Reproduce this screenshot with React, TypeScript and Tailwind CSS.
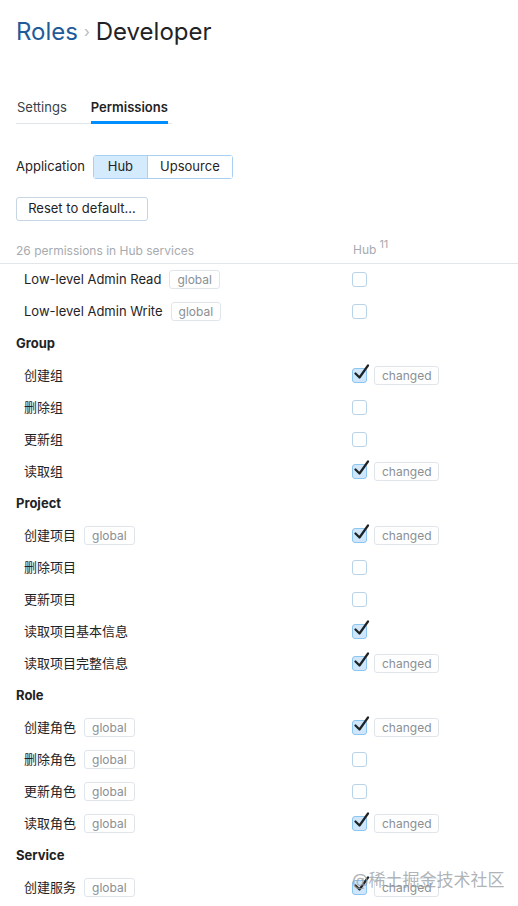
import React, { useState } from "react";

interface Permission {
  name: string;
  global?: boolean;
  checked?: boolean;
  changed?: boolean;
}

interface Group {
  title?: string;
  items: Permission[];
}

const GROUPS: Group[] = [
  {
    items: [
      { name: "Low-level Admin Read", global: true },
      { name: "Low-level Admin Write", global: true },
    ],
  },
  {
    title: "Group",
    items: [
      { name: "创建组", checked: true, changed: true },
      { name: "删除组" },
      { name: "更新组" },
      { name: "读取组", checked: true, changed: true },
    ],
  },
  {
    title: "Project",
    items: [
      { name: "创建项目", global: true, checked: true, changed: true },
      { name: "删除项目" },
      { name: "更新项目" },
      { name: "读取项目基本信息", checked: true },
      { name: "读取项目完整信息", checked: true, changed: true },
    ],
  },
  {
    title: "Role",
    items: [
      { name: "创建角色", global: true, checked: true, changed: true },
      { name: "删除角色", global: true },
      { name: "更新角色", global: true },
      { name: "读取角色", global: true, checked: true, changed: true },
    ],
  },
  {
    title: "Service",
    items: [{ name: "创建服务", global: true, checked: true, changed: true }],
  },
];

// 작은 태그 (global / changed)
const Tag: React.FC<{ children: React.ReactNode }> = ({ children }) => (
  <span className="inline-flex h-[19px] items-center rounded-[3px] border border-[#dfe5eb] px-[7px] text-[12px] leading-none text-[#8a8f94]">
    {children}
  </span>
);

const Checkbox: React.FC<{ checked?: boolean }> = ({ checked }) => (
  <span
    className={`relative block h-[15px] w-[15px] rounded-[3px] border ${
      checked ? "border-[#8cc4f2] bg-[#cfe6fb]" : "border-[#b9d3e8] bg-white"
    }`}
  >
    {checked && (
      <svg
        className="absolute left-[1px] top-[-5px]"
        width="16"
        height="16"
        viewBox="0 0 16 16"
        fill="none"
      >
        <path
          d="M1.5 9.5 L5.5 13.5 L14 1.5"
          stroke="#1f2326"
          strokeWidth="2.2"
          strokeLinecap="round"
          strokeLinejoin="round"
        />
      </svg>
    )}
  </span>
);

const App: React.FC = () => {
  const [app, setApp] = useState("Hub");

  return (
    <div
      className="relative min-h-[906px] w-[518px] overflow-hidden bg-white text-[13px] text-[#1f2326]"
      style={{ fontFamily: "Inter, 'Noto Sans CJK SC', sans-serif" }}
    >
      {/* 제목 */}
      <h1 className="flex items-center px-4 pt-[16px] text-[24px] leading-[32px]">
        <span className="text-[#1f5b99]">Roles</span>
        <span className="mx-[6px] text-[15px] text-[#b5b9bd]">›</span>
        <span>Developer</span>
      </h1>

      {/* 탭 */}
      <div className="mx-4 mt-[50px] flex w-[156px] gap-[24px] border-b border-[#dfe5eb] pl-[1px] text-[13px]">
        <span className="pb-[5px] text-[#3a3f44]">Settings</span>
        <span className="-mb-[1px] border-b-[3px] border-[#008eff] pb-[2px] font-semibold">
          Permissions
        </span>
      </div>

      {/* 애플리케이션 선택 */}
      <div className="mt-[31px] flex items-center px-4">
        <span className="mr-[8px]">Application</span>
        <div className="flex h-[24px] rounded-[3px] border border-[#a9d0f2]">
          {["Hub", "Upsource"].map((name, i) => (
            <button
              key={name}
              onClick={() => setApp(name)}
              className={`h-full text-[13px] ${i === 0 ? "w-[54px] border-r border-[#a9d0f2]" : "w-[84px]"} ${
                app === name ? "bg-[#d4eafd]" : "bg-white"
              }`}
            >
              {name}
            </button>
          ))}
        </div>
      </div>

      <div className="mt-[18px] px-4">
        <button className="h-[24px] w-[132px] rounded-[3px] border border-[#c6d6e4] bg-white text-[13px]">
          Reset to default...
        </button>
      </div>

      {/* 헤더 */}
      <div className="mt-[19px] flex h-[24px] items-start border-b border-[#e3e6e9] text-[#a7abaf]">
        <span className="w-[353px] pl-4 pt-[2px] text-[12px]">26 permissions in Hub services</span>
        <span className="pt-[1px] text-[12px]">
          Hub<sup className="ml-[3px] text-[11px]">11</sup>
        </span>
      </div>

      {/* 권한 목록 */}
      <div>
        {GROUPS.map((group, gi) => (
          <div key={gi}>
            {group.title && (
              <div className="flex h-[32px] items-center pl-4 font-bold">{group.title}</div>
            )}
            {group.items.map((p) => (
              <div key={p.name} className="flex h-[32px] items-center">
                <div className="flex w-[352px] items-center gap-2 pl-6">
                  <span>{p.name}</span>
                  {p.global && <Tag>global</Tag>}
                </div>
                <div className="flex items-center gap-[7px]">
                  <Checkbox checked={p.checked} />
                  {p.changed && <Tag>changed</Tag>}
                </div>
              </div>
            ))}
          </div>
        ))}
      </div>

      {/* 워터마크 */}
      <div className="absolute left-[352px] top-[868px] text-[17px] text-[#9a9ea3]/80">
        @稀土掘金技术社区
      </div>
    </div>
  );
};

export default App;
